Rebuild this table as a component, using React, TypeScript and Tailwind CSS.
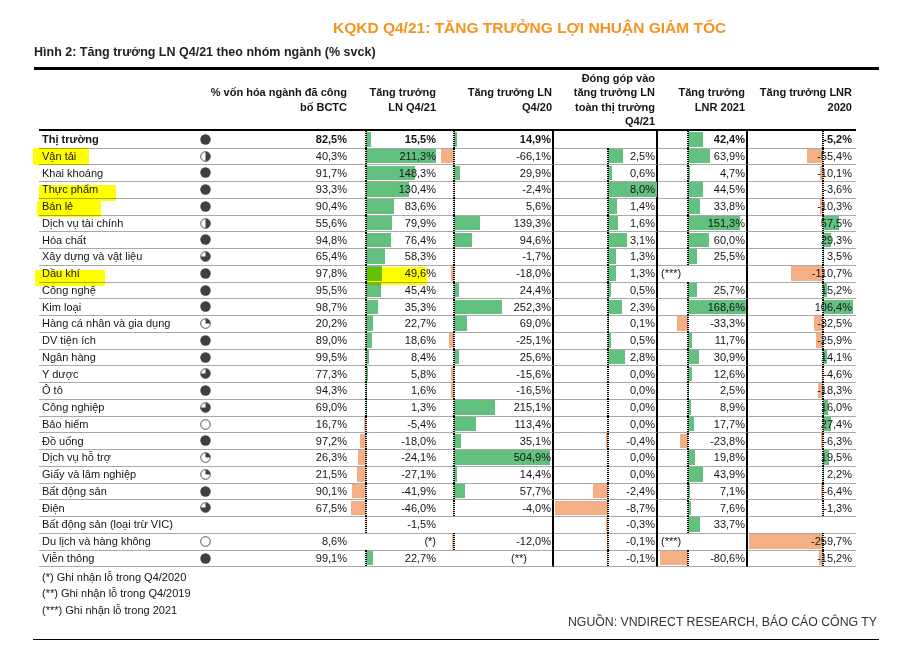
import React from "react";

const GREEN = "#63c17f";
const PEACH = "#f4b084";

type Note = { t: string; pr?: string; left?: boolean };
type V = number | null | Note;

interface Row {
  name: string;
  cap: string | null;
  ball: number | null;
  v: V[];
  bold?: boolean;
  nameMark?: string;
  valMark?: string;
}

/** axis = px from the cell's left edge, scale = px per percentage point */
const COLS = [
  { axis: 16, scale: 0.33, axisCls: "left-[15px]", cell: "pr-[4px]", edge: "" },
  { axis: 14, scale: 0.19, axisCls: "left-[13px]", cell: "pr-[1px]", edge: "border-r-2 border-r-black" },
  { axis: 54, scale: 6.1, axisCls: "left-[53px]", cell: "pr-[1px]", edge: "border-r-2 border-r-black" },
  { axis: 30, scale: 0.345, axisCls: "left-[29px]", cell: "pr-[1px]", edge: "border-r-2 border-r-black" },
  { axis: 75, scale: 0.286, axisCls: "left-[74px]", cell: "pr-[4px]", edge: "" },
];

const ROWS: Row[] = [
  { name: "Thị trường", cap: "82,5%", ball: 4, v: [15.5, 14.9, null, 42.4, -5.2], bold: true },
  { name: "Vận tải", cap: "40,3%", ball: 2, v: [211.3, -66.1, 2.5, 63.9, -55.4], nameMark: "left-[-6px] top-[0px] w-[56px] h-[17px]" },
  { name: "Khai khoáng", cap: "91,7%", ball: 4, v: [148.3, 29.9, 0.6, 4.7, -10.1] },
  { name: "Thực phẩm", cap: "93,3%", ball: 4, v: [130.4, -2.4, 8.0, 44.5, -3.6], nameMark: "left-[0px] top-[4px] w-[77px] h-[16px]" },
  { name: "Bán lẻ", cap: "90,4%", ball: 4, v: [83.6, 5.6, 1.4, 33.8, -10.3], nameMark: "left-[-2px] top-[3px] w-[64px] h-[16px]" },
  { name: "Dịch vụ tài chính", cap: "55,6%", ball: 2, v: [79.9, 139.3, 1.6, 151.3, 57.5] },
  { name: "Hóa chất", cap: "94,8%", ball: 4, v: [76.4, 94.6, 3.1, 60.0, 29.3] },
  { name: "Xây dựng và vật liệu", cap: "65,4%", ball: 3, v: [58.3, -1.7, 1.3, 25.5, 3.5] },
  {
    name: "Dầu khí",
    cap: "97,8%",
    ball: 4,
    v: [49.6, -18.0, 1.3, { t: "(***)", left: true }, -110.7],
    nameMark: "left-[-4px] top-[5px] w-[70px] h-[16px]",
    valMark: "left-[17px] top-[2px] w-[60px] h-[18px]",
  },
  { name: "Công nghệ", cap: "95,5%", ball: 4, v: [45.4, 24.4, 0.5, 25.7, 15.2] },
  { name: "Kim loại", cap: "98,7%", ball: 4, v: [35.3, 252.3, 2.3, 168.6, 106.4] },
  { name: "Hàng cá nhân và gia dụng", cap: "20,2%", ball: 1, v: [22.7, 69.0, 0.1, -33.3, -32.5] },
  { name: "DV tiện ích", cap: "89,0%", ball: 4, v: [18.6, -25.1, 0.5, 11.7, -25.9] },
  { name: "Ngân hàng", cap: "99,5%", ball: 4, v: [8.4, 25.6, 2.8, 30.9, 14.1] },
  { name: "Y dược", cap: "77,3%", ball: 3, v: [5.8, -15.6, 0.0, 12.6, -4.6] },
  { name: "Ô tô", cap: "94,3%", ball: 4, v: [1.6, -16.5, 0.0, 2.5, -18.3] },
  { name: "Công nghiệp", cap: "69,0%", ball: 3, v: [1.3, 215.1, 0.0, 8.9, 16.0] },
  { name: "Bảo hiểm", cap: "16,7%", ball: 0, v: [-5.4, 113.4, 0.0, 17.7, 27.4] },
  { name: "Đồ uống", cap: "97,2%", ball: 4, v: [-18.0, 35.1, -0.4, -23.8, -6.3] },
  { name: "Dịch vụ hỗ trợ", cap: "26,3%", ball: 1, v: [-24.1, 504.9, 0.0, 19.8, 19.5] },
  { name: "Giấy và lâm nghiệp", cap: "21,5%", ball: 1, v: [-27.1, 14.4, 0.0, 43.9, 2.2] },
  { name: "Bất động sản", cap: "90,1%", ball: 4, v: [-41.9, 57.7, -2.4, 7.1, -6.4] },
  { name: "Điện", cap: "67,5%", ball: 3, v: [-46.0, -4.0, -8.7, 7.6, -1.3] },
  { name: "Bất động sản (loại trừ VIC)", cap: null, ball: null, v: [-1.5, null, -0.3, 33.7, null] },
  { name: "Du lịch và hàng không", cap: "8,6%", ball: 0, v: [{ t: "(*)" }, -12.0, -0.1, { t: "(***)", left: true }, -259.7] },
  { name: "Viễn thông", cap: "99,1%", ball: 4, v: [22.7, { t: "(**)", pr: "pr-[25px]" }, -0.1, -80.6, -15.2] },
];

const GRID = "grid grid-cols-[156px_20px_135px_90px_114px_104px_90px_108px]";

function fmt(n: number) {
  return n.toFixed(1).replace(".", ",") + "%";
}

function Ball({ level }: { level: number }) {
  const c = "#404040";
  return (
    <svg width="11" height="11" viewBox="0 0 11 11">
      {level === 4 ? (
        <circle cx="5.5" cy="5.5" r="5.2" fill={c} />
      ) : (
        <>
          <circle cx="5.5" cy="5.5" r="4.8" fill="#fff" stroke={c} strokeWidth="0.9" />
          {level === 1 && <path d="M5.5 5.5 L5.5 0.7 A4.8 4.8 0 0 1 10.3 5.5 Z" fill={c} />}
          {level === 2 && <path d="M5.5 0.7 A4.8 4.8 0 0 1 5.5 10.3 Z" fill={c} />}
          {level === 3 && <path d="M5.5 5.5 L5.5 0.7 A4.8 4.8 0 1 1 0.7 5.5 Z" fill={c} />}
        </>
      )}
    </svg>
  );
}

function ValueCell({ v, col, mark }: { v: V; col: (typeof COLS)[number]; mark?: string }) {
  const isNum = typeof v === "number";
  const note = v !== null && typeof v === "object" ? v : null;
  const left = isNum && v > 0 ? col.axis : col.axis + (isNum ? v : 0) * col.scale;
  const width = isNum ? Math.abs(v) * col.scale : 0;
  return (
    <div
      className={`relative flex h-full items-center border-b border-b-[#a9a9a9] ${note?.left ? "justify-start pl-[3px]" : "justify-end"} ${note?.pr ?? col.cell} ${col.edge}`}
    >
      {isNum && width > 0 && (
        <div
          className="absolute top-[1px] bottom-[1px]"
          style={{ left, width, backgroundColor: v > 0 ? GREEN : PEACH }}
        />
      )}
      {isNum && (
        <div className={`absolute top-0 bottom-0 w-[2px] border-x border-dotted border-black ${col.axisCls}`} />
      )}
      <span className="relative whitespace-nowrap">{isNum ? fmt(v) : note ? note.t : ""}</span>
      {mark && <div className={`absolute z-10 rounded-[2px] bg-[#ffff00] mix-blend-multiply ${mark}`} />}
    </div>
  );
}

function TableRow({ row }: { row: Row }) {
  return (
    <div className={`${GRID} h-[16.75px] ${row.bold ? "font-bold" : ""}`}>
      <div className="relative flex h-full items-center border-b border-b-[#a9a9a9] pl-[3px]">
        <span className="whitespace-nowrap">{row.name}</span>
        {row.nameMark && <div className={`absolute z-10 rounded-[2px] bg-[#ffff00] mix-blend-multiply ${row.nameMark}`} />}
      </div>
      <div className="flex h-full items-center justify-center border-b border-b-[#a9a9a9]">
        {row.ball !== null && <Ball level={row.ball} />}
      </div>
      <div className="flex h-full items-center justify-end border-b border-b-[#a9a9a9] pr-[3px]">{row.cap}</div>
      {row.v.map((v, i) => (
        <ValueCell key={i} v={v} col={COLS[i]} mark={i === 0 ? row.valMark : undefined} />
      ))}
    </div>
  );
}

export default function App() {
  return (
    <div className="h-[651px] w-[906px] overflow-hidden bg-white text-[11px] text-[#151515] font-['Liberation_Sans',Arial,sans-serif]">
      <h1 className="pt-[19px] pl-[333px] text-[15.5px] font-bold leading-[17px] text-[#f7931e]">
        KQKD Q4/21: TĂNG TRƯỞNG LỢI NHUẬN GIẢM TỐC
      </h1>
      <p className="mt-[9px] pl-[34px] text-[12.5px] font-bold leading-[14px] text-[#222]">
        Hình 2: Tăng trưởng LN Q4/21 theo nhóm ngành (% svck)
      </p>
      <div className="mt-[8px] ml-[34px] h-[3px] w-[845px] bg-black" />

      <div className="ml-[39px] w-[817px]">
        <div className={`${GRID} h-[59px] items-center font-bold leading-[14.5px]`}>
          <div />
          <div className="col-span-2 whitespace-nowrap pr-[3px] text-right">
            % vốn hóa ngành đã công
            <br />
            bố BCTC
          </div>
          <div className="whitespace-nowrap pr-[4px] text-right">
            Tăng trưởng
            <br />
            LN Q4/21
          </div>
          <div className="whitespace-nowrap pr-[2px] text-right">
            Tăng trưởng LN
            <br />
            Q4/20
          </div>
          <div className="whitespace-nowrap pr-[3px] text-right">
            Đóng góp vào
            <br />
            tăng trưởng LN
            <br />
            toàn thị trường
            <br />
            Q4/21
          </div>
          <div className="whitespace-nowrap pr-[3px] text-right">
            Tăng trưởng
            <br />
            LNR 2021
          </div>
          <div className="whitespace-nowrap pr-[4px] text-right">
            Tăng trưởng LNR
            <br />
            2020
          </div>
        </div>
        <div className="border-t-2 border-black">
          {ROWS.map((r) => (
            <TableRow key={r.name} row={r} />
          ))}
        </div>
      </div>

      <div className="flex justify-between pl-[42px] pr-[29px]">
        <div className="pt-[2px] leading-[16.5px]">
          <p>(*) Ghi nhận lỗ trong Q4/2020</p>
          <p>(**) Ghi nhận lỗ trong Q4/2019</p>
          <p>(***) Ghi nhận lỗ trong 2021</p>
        </div>
        <p className="pt-[48px] text-[12.3px] leading-[14px] text-[#333]">NGUỒN: VNDIRECT RESEARCH, BÁO CÁO CÔNG TY</p>
      </div>
      <div className="mt-[10px] ml-[33px] h-[1.5px] w-[846px] bg-black" />
    </div>
  );
}
